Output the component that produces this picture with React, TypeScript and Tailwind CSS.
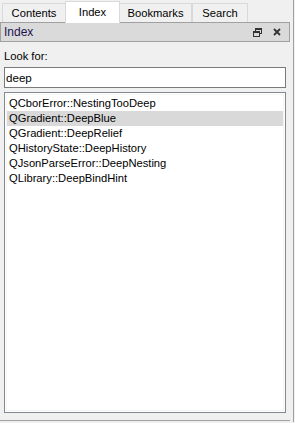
const items = [
  "QCborError::NestingTooDeep",
  "QGradient::DeepBlue",
  "QGradient::DeepRelief",
  "QHistoryState::DeepHistory",
  "QJsonParseError::DeepNesting",
  "QLibrary::DeepBindHint",
];

const tabs = [
  { label: "Contents", w: "w-[64px]" },
  { label: "Index", w: "w-[55px]" },
  { label: "Bookmarks", w: "w-[73px]" },
  { label: "Search", w: "w-[56px]" },
];

export default function App() {
  return (
    <div
      className="flex h-[423px] w-[295px] bg-[#f0f0f0] text-[11.2px] leading-[15px] text-black"
      style={{ fontFamily: '"Liberation Sans", Arial, sans-serif' }}
    >
      <div className="flex w-[290px] flex-col">
        {/* Tab bar */}
        <div className="flex h-[22px] items-end pl-[2px]">
          {tabs.map((t) =>
            t.label === "Index" ? (
              <div
                key={t.label}
                className={`${t.w} relative z-10 -mx-px mb-[-1px] flex h-[22px] items-center justify-center border-x border-t border-[#d9d9d9] bg-white`}
              >
                {t.label}
              </div>
            ) : (
              <div
                key={t.label}
                className={`${t.w} flex h-[19px] items-center justify-center border-x border-t border-[#d9d9d9] bg-[#f0f0f0]`}
              >
                {t.label}
              </div>
            )
          )}
        </div>

        {/* Dock title bar */}
        <div className="flex h-[20px] items-center border border-[#a0a0a0] bg-[#dadada] pl-[3px] pr-[8px]">
          <span className="text-[12px] text-[#1e1450]">Index</span>
          <div className="ml-auto flex items-center gap-[11px]">
            <svg width="9" height="9" viewBox="0 0 9 9" className="text-[#333]">
              <rect x="2.5" y="0.5" width="6" height="5" fill="none" stroke="currentColor" />
              <line x1="2" y1="1.5" x2="9" y2="1.5" stroke="currentColor" />
              <rect x="0.5" y="3.5" width="6" height="5" fill="#dadada" stroke="currentColor" />
              <line x1="0" y1="4.5" x2="7" y2="4.5" stroke="currentColor" />
            </svg>
            <svg width="8" height="8" viewBox="0 0 8 8" className="text-[#333]">
              <path d="M1 1 L7 7 M7 1 L1 7" stroke="currentColor" strokeWidth="1.8" />
            </svg>
          </div>
        </div>

        {/* Body */}
        <div className="flex flex-1 flex-col px-[4px] pt-[7px]">
          <div className="h-[16px]">Look for:</div>
          <div className="mt-[2px] flex h-[21px] w-[282px] items-center border border-[#7a7a7a] bg-white px-[1px] text-[11.6px]">
            deep
          </div>
          <div className="mt-[4px] h-[321px] w-[282px] border border-[#828790] bg-white p-px">
            <div className="h-full border border-[#f4f4f4] pt-px">
              {items.map((it, i) => (
                <div
                  key={it}
                  className={`h-[15px] pl-[2px] ${i === 1 ? "bg-[#d9d9d9]" : ""}`}
                >
                  {it}
                </div>
              ))}
            </div>
          </div>
        </div>
        <div className="mb-[1px] h-[2px] border-t border-[#a0a0a0] bg-[#f0f0f0]" />
      </div>
      <div className="w-[3px]" />
      <div className="mb-[1px] w-px bg-[#a0a0a0]" />
    </div>
  );
}
